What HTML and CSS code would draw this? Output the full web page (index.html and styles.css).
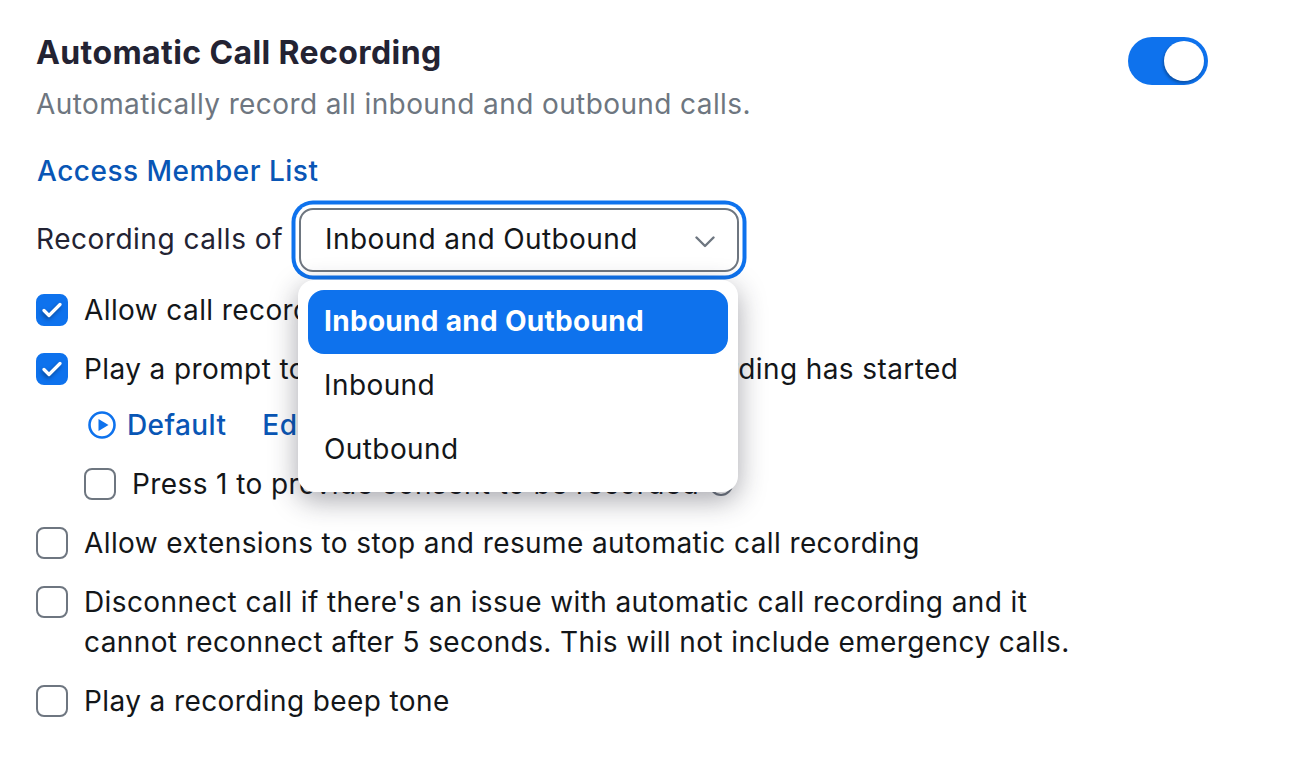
FILE: index.html
```html
<!DOCTYPE html>
<html lang="en">
<head>
  <meta charset="UTF-8" />
  <meta name="viewport" content="width=device-width, initial-scale=1.0"/>
  <title>Automatic Call Recording</title>
  <link rel="stylesheet" href="styles.css">
</head>
<body>
  <div class="setting">
    <!-- Header -->
    <div class="setting-head">
      <div>
        <h2 class="setting-title">Automatic Call Recording</h2>
        <p class="setting-desc">Automatically record all inbound and outbound calls.</p>
      </div>
      <span class="toggle"><span class="toggle-knob"></span></span>
    </div>

    <a class="link access-link" href="#">Access Member List</a>

    <!-- Select + open menu -->
    <div class="select-row">
      <span class="select-label">Recording calls of</span>
      <div class="select-wrap">
        <div class="select-box">
          <span class="select-value">Inbound and Outbound</span>
          <svg class="chevron" width="20" height="12" viewBox="0 0 20 12"><path d="M1.500 1.500l8.500 8.500 8.500-8.500" fill="none" stroke="#6e7680" stroke-width="2.400" stroke-linecap="round" stroke-linejoin="round"/></svg>
        </div>
        <div class="menu">
          <div class="menu-item active">Inbound and Outbound</div>
          <div class="menu-item">Inbound</div>
          <div class="menu-item">Outbound</div>
        </div>
      </div>
    </div>

    <!-- Options -->
    <div class="option option-first">
      <span class="check on"><svg class="tick" width="20" height="16" viewBox="0 0 20 16"><path d="M2 8.500l5 5L18 2.500" fill="none" stroke="#fff" stroke-width="3.200" stroke-linecap="round" stroke-linejoin="round"/></svg></span>
      <span>Allow call recording to be stopped</span>
    </div>
    <div class="option">
      <span class="check on"><svg class="tick" width="20" height="16" viewBox="0 0 20 16"><path d="M2 8.500l5 5L18 2.500" fill="none" stroke="#fff" stroke-width="3.200" stroke-linecap="round" stroke-linejoin="round"/></svg></span>
      <span>Play a prompt to inform all call parties that recording has started</span>
    </div>
    <div class="prompt-row">
      <a class="link default-link" href="#">
        <svg width="28" height="28" viewBox="0 0 28 28"><circle cx="14" cy="14" r="12.500" fill="none" stroke="#0e72ed" stroke-width="2.600"/><path d="M10.500 8v12l10-6z" fill="#0e72ed"/></svg>
        Default
      </a>
      <a class="link" href="#">Edit</a>
    </div>
    <div class="option option-sub">
      <span class="check"></span>
      <span>Press 1 to provide consent to be recorded</span>
      <span class="info"></span>
    </div>
    <div class="option">
      <span class="check"></span>
      <span>Allow extensions to stop and resume automatic call recording</span>
    </div>
    <div class="option">
      <span class="check"></span>
      <span>Disconnect call if there's an issue with automatic call recording and it<br>cannot reconnect after 5 seconds. This will not include emergency calls.</span>
    </div>
    <div class="option">
      <span class="check"></span>
      <span>Play a recording beep tone</span>
    </div>
  </div>
</body>
</html>
```

FILE: styles.css
```css
* {
  box-sizing: border-box;
}
body {
  margin: 0;
  background-color: #fff;
  font-family: Inter, "Liberation Sans", sans-serif;
  font-size: 28px;
  line-height: 40px;
  letter-spacing: 0.4px;
  color: #131619;
}
.setting {
  padding: 33px 82px 0 36px;
}
.setting-head {
  display: flex;
  justify-content: space-between;
  align-items: flex-start;
}
.setting-title {
  margin: 0;
  font-size: 32px;
  font-weight: 700;
  color: #232333;
}
.setting-desc {
  margin: 11px 0 0;
  color: #6e7680;
}
.toggle {
  display: flex;
  justify-content: flex-end;
  width: 80px;
  height: 48px;
  margin-top: 4px;
  padding: 4px;
  background-color: #0e72ed;
  border-radius: 24px;
}
.toggle-knob {
  width: 40px;
  height: 40px;
  background-color: #fff;
  border-radius: 50%;
  box-shadow: -1px 2px 3px rgba(0, 0, 0, 0.3);
}
.link {
  color: #0956b5;
  font-weight: 500;
  text-decoration: none;
}
.access-link {
  display: block;
  margin: 27px 0 0 1px;
  letter-spacing: 0.5px;
}
.select-row {
  display: flex;
  align-items: center;
  gap: 16px;
  margin-top: 17px;
}
.select-label {
  margin-bottom: 2px;
  color: #232333;
  letter-spacing: 0.52px;
}
.select-wrap {
  position: relative;
}
.select-box {
  display: flex;
  justify-content: space-between;
  align-items: center;
  width: 440px;
  height: 64px;
  padding: 0 22px 0 24px;
  background-color: #fff;
  border: 2px solid #6e7680;
  border-radius: 14px;
  box-shadow: 0 0 0 3.500px #fff, 0 0 0 7.500px #0e72ed;
}
.select-value {
  margin-bottom: 2px;
}
.chevron {
  margin-top: 3px;
}
.menu {
  position: absolute;
  top: 72px;
  left: -1px;
  width: 440px;
  padding: 10px;
  background-color: #fff;
  border-radius: 16px;
  box-shadow: 0 8px 28px rgba(35, 35, 51, 0.4);
}
.menu-item {
  height: 64px;
  padding: 11px 16px;
}
.menu-item.active {
  background-color: #0e72ed;
  border-radius: 16px;
  color: #fff;
  font-weight: 700;
  letter-spacing: 0.3px;
}
.option {
  display: flex;
  align-items: flex-start;
  gap: 16px;
  margin-top: 19px;
}
.option-first {
  margin-top: 18px;
}
.option-sub {
  margin-left: 48px;
}
.check {
  display: flex;
  justify-content: center;
  align-items: center;
  flex: none;
  width: 32px;
  height: 32px;
  margin-top: 4px;
  background-color: #fff;
  border: 2px solid #6e7680;
  border-radius: 8px;
}
.check.on {
  background-color: #0e72ed;
  border-color: #0e72ed;
}
.tick {
  flex: none;
  filter: drop-shadow(-1px 2px 2px rgba(0, 0, 0, 0.4));
}
.prompt-row {
  display: flex;
  gap: 36px;
  margin: 16px 0 0 52px;
}
.default-link {
  display: flex;
  align-items: center;
  gap: 11px;
}
.info {
  width: 24px;
  height: 24px;
  margin: 8px 0 0 -6px;
  border: 2px solid #6e7680;
  border-radius: 50%;
}
```
